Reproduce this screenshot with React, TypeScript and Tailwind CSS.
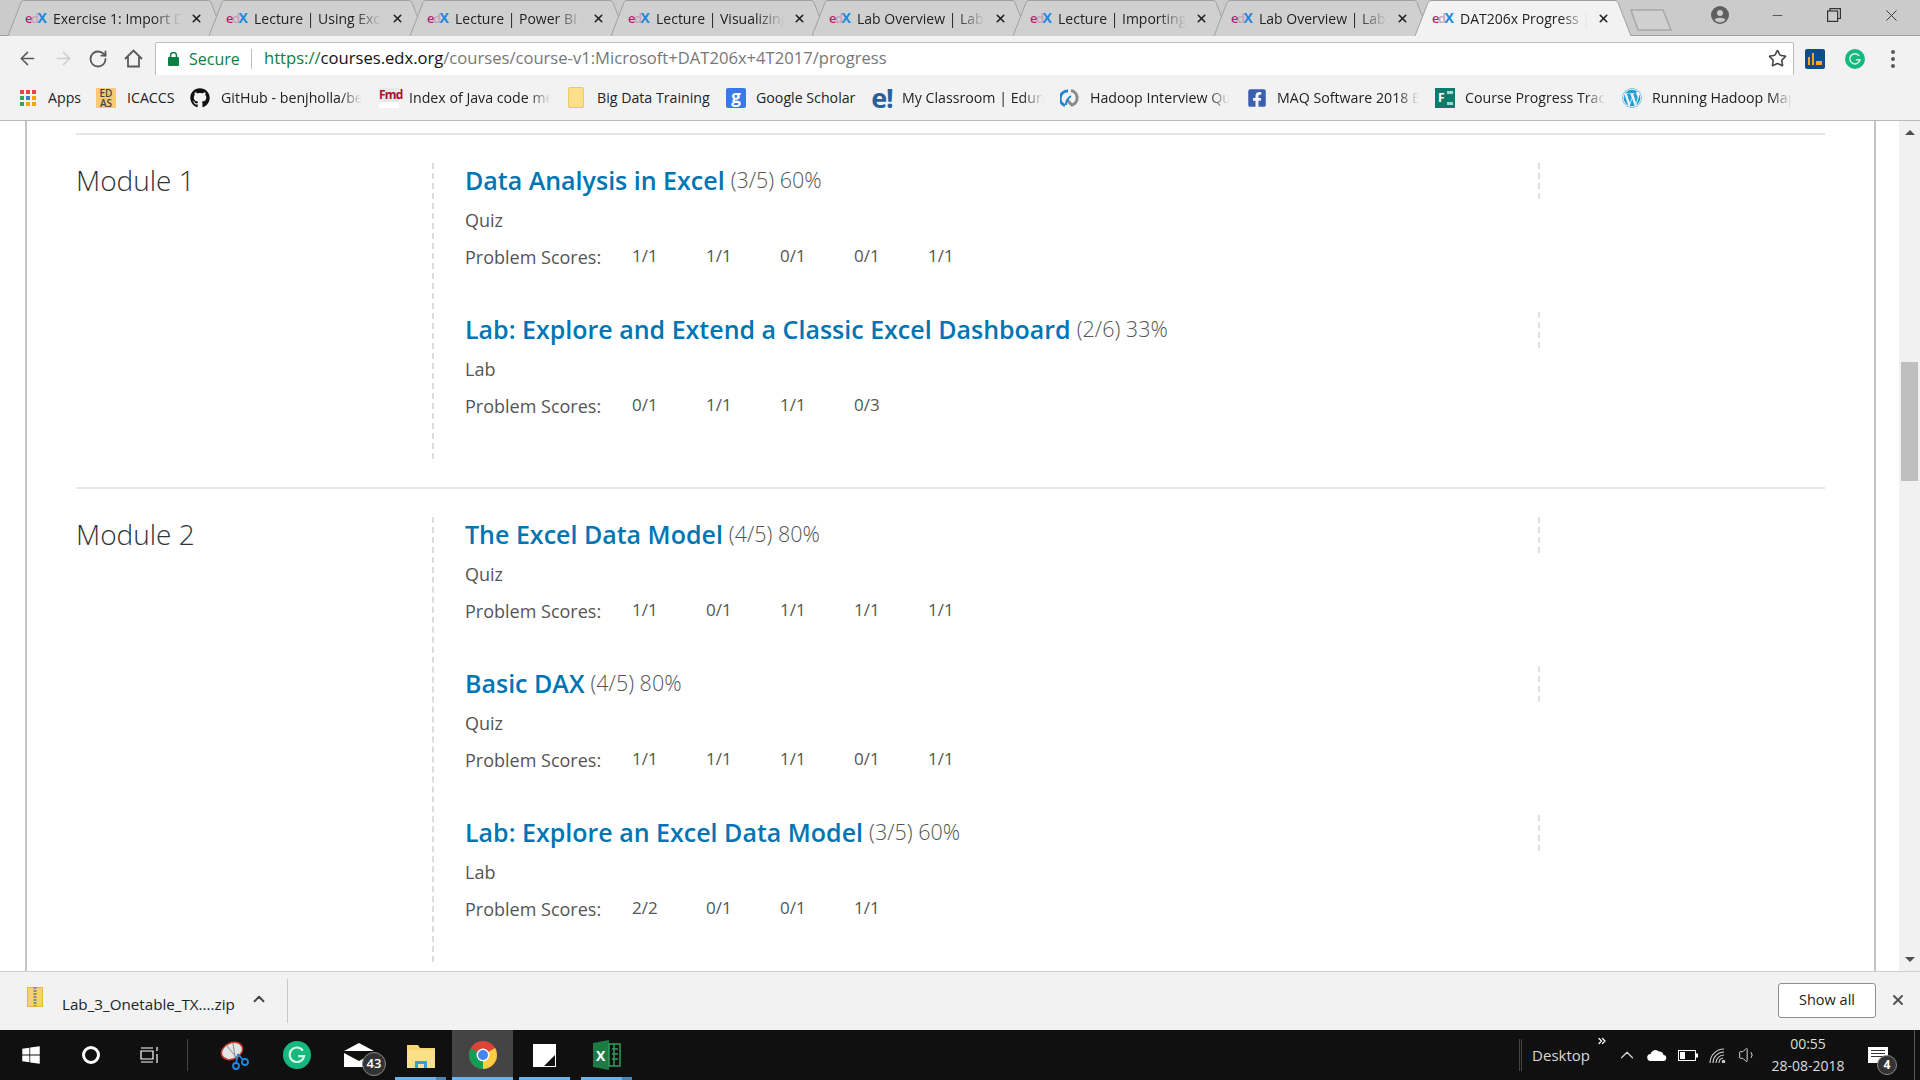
import { ArrowLeft, ArrowRight, RotateCw, Star, ChevronUp, ChevronsRight, X, Minus, Volume1 } from 'lucide-react';
import { FaGithub, FaWindows, FaWordpress, FaFacebookSquare } from 'react-icons/fa';

const tabs = [
  'Exercise 1: Import Data',
  'Lecture | Using Excel',
  'Lecture | Power BI M',
  'Lecture | Visualizing',
  'Lab Overview | Lab:',
  'Lecture | Importing',
  'Lab Overview | Lab:',
  'DAT206x Progress | ',
];

function EdxLogo() {
  return (
    <span className="flex w-[20px] items-baseline text-[13px] leading-none font-semibold tracking-[-1.5px]">
      <span className="text-[#b3206f]">e</span>
      <span className="text-[#c7a3b6]">d</span>
      <span className="text-[14px] font-bold text-[#1b8ae0]">X</span>
    </span>
  );
}

function Tab({ title, active }: { title: string; active?: boolean }) {
  return (
    <div className={`relative -mr-[16px] h-[36px] w-[217px] shrink-0 ${active ? 'z-10' : ''}`}>
      <svg className="absolute inset-0" width="217" height="36" viewBox="0 0 217 36">
        <path
          d="M0,36 L13,2.5 Q14,0.5 16,0.5 H200 Q202,0.5 203,2.5 L216,36"
          fill={active ? '#f2f2f2' : '#d0d0d0'}
          stroke="#a0a0a0"
        />
      </svg>
      <div className="relative flex h-[36px] items-center pl-[17px]">
        <EdxLogo />
        <span className="ml-[8px] w-[128px] overflow-hidden text-[14px] whitespace-nowrap text-[#222] [mask-image:linear-gradient(to_right,black_78%,transparent)]">
          {title}
        </span>
        <X className="ml-[9px] text-[#222]" size={13} strokeWidth={3} />
      </div>
    </div>
  );
}

function Grammarly({ size }: { size: number }) {
  return (
    <svg width={size} height={size} viewBox="0 0 24 24">
      <circle cx="12" cy="12" r="12" fill="#15b87f" />
      <path d="M17 8.2A6.2 6.2 0 1 0 18 13h-5" fill="none" stroke="#d8f5ea" strokeWidth="1.8" />
    </svg>
  );
}

function AppsGrid() {
  const colors = ['#e8453c', '#e8453c', '#e8453c', '#34a853', '#3b78e7', '#f4a400', '#34a853', '#f4a400', '#f4a400'];
  return (
    <span className="grid h-[16px] w-[16px] grid-cols-3 gap-[2px]">
      {colors.map((c, i) => (
        <span key={i} className="h-[4px] w-[4px]" style={{ background: c }} />
      ))}
    </span>
  );
}

const bookmarks = [
  {
    icon: (
      <span className="flex h-[20px] w-[20px] flex-col items-center bg-[#f6cb74] text-[10px] leading-[10px] font-semibold text-[#444]">
        <span>ED</span>
        <span>AS</span>
      </span>
    ),
    text: 'ICACCS', w: 'w-[48px]', ml: 'ml-[15px]', gap: 'ml-[11px]',
  },
  { icon: <FaGithub className="text-[#111]" size={20} />, text: 'GitHub - benjholla/bespoke', w: 'w-[141px]', ml: 'ml-[15px]', gap: 'ml-[11px]', fade: true },
  {
    icon: (
      <span className="flex h-[20px] w-[20px] items-start bg-white">
        <span className="h-[14px] w-[20px] bg-[#e8e8e8] text-center text-[12px] leading-[14px] font-bold tracking-[-0.8px] text-[#b01030]">Fmd</span>
      </span>
    ),
    text: 'Index of Java code metrics', w: 'w-[142px]', ml: 'ml-[17px]', fade: true,
  },
  { icon: <span className="mx-[2px] h-[21px] w-[16px] rounded-[2px] border border-[#eecb5e] bg-[#fbe08a]" />, text: 'Big Data Training', w: 'w-[113px]', ml: 'ml-[15px]', gap: 'ml-[11px]' },
  {
    icon: (
      <span className="flex h-[20px] w-[20px] items-center justify-center rounded-[2px] bg-[#3b78e7] pb-[3px] text-[17px] leading-none font-bold text-white">g</span>
    ),
    text: 'Google Scholar', w: 'w-[101px]', ml: 'ml-[16px]',
  },
  { icon: <span className="flex h-[20px] w-[20px] items-center justify-center pb-[1px] text-[27px] leading-none font-bold tracking-[-1px] text-[#2a5f9e]">e!</span>, text: 'My Classroom | Edureka', w: 'w-[142px]', ml: 'ml-[15px]', fade: true },
  {
    icon: (
      <svg width="20" height="20" viewBox="0 0 20 20" fill="none" strokeWidth="3">
        <path d="M8 3A7.5 7.5 0 0 0 5 17.5" stroke="#1c86d1" />
        <path d="M11 2.5a7.5 7.5 0 0 1 1 14.5L7 12" stroke="#8a8a8a" />
        <path d="M6 17c0-4 2-7 5-9" stroke="#1c86d1" strokeWidth="2" />
      </svg>
    ),
    text: 'Hadoop Interview Questions', w: 'w-[140px]', ml: 'ml-[16px]', fade: true,
  },
  { icon: <FaFacebookSquare className="text-[#3b5fb0]" size={20} />, text: 'MAQ Software 2018 Batch', w: 'w-[142px]', ml: 'ml-[17px]', fade: true },
  {
    icon: (
      <span className="flex h-[20px] w-[20px] items-center bg-[#0f7b6c] pl-[3px] text-[12px] leading-none font-bold text-white">
        F
        <span className="ml-[2px] h-[14px] w-[6px] border-y-[3px] border-[#9fd8cf] bg-[#0f7b6c]" />
      </span>
    ),
    text: 'Course Progress Tracker', w: 'w-[141px]', ml: 'ml-[16px]', fade: true,
  },
  { icon: <FaWordpress className="text-[#21a0d8]" size={20} />, text: 'Running Hadoop MapReduce', w: 'w-[140px]', ml: 'ml-[16px]', fade: true },
];

interface Item {
  title: string;
  stats: string;
  kind: string;
  scores: string[];
}

const modules: { name: string; items: Item[] }[] = [
  {
    name: 'Module 1',
    items: [
      { title: 'Data Analysis in Excel', stats: '(3/5) 60%', kind: 'Quiz', scores: ['1/1', '1/1', '0/1', '0/1', '1/1'] },
      { title: 'Lab: Explore and Extend a Classic Excel Dashboard', stats: '(2/6) 33%', kind: 'Lab', scores: ['0/1', '1/1', '1/1', '0/3'] },
    ],
  },
  {
    name: 'Module 2',
    items: [
      { title: 'The Excel Data Model', stats: '(4/5) 80%', kind: 'Quiz', scores: ['1/1', '0/1', '1/1', '1/1', '1/1'] },
      { title: 'Basic DAX', stats: '(4/5) 80%', kind: 'Quiz', scores: ['1/1', '1/1', '1/1', '0/1', '1/1'] },
      { title: 'Lab: Explore an Excel Data Model', stats: '(3/5) 60%', kind: 'Lab', scores: ['2/2', '0/1', '0/1', '1/1'] },
    ],
  },
];

function Section({ item }: { item: Item }) {
  return (
    <div className="mb-[38px] h-[111px] last:mb-[36px]">
      <div className="flex h-[36px] items-center border-r-2 border-dashed border-[#e0e0e0] pb-[2px]">
        <span className="text-[25px] leading-none font-semibold text-[#0075b4]">{item.title}</span>
        <span className="ml-[6px] text-[21.5px] leading-none font-light text-[#555]">{item.stats}</span>
      </div>
      <div className="flex h-[41px] items-center pt-[2px] text-[18px] font-medium text-[#555]">{item.kind}</div>
      <div className="flex h-[34px] items-center">
        <span className="w-[167px] text-[18px] font-medium text-[#555]">Problem Scores:</span>
        {item.scores.map((s, i) => (
          <span key={i} className="mb-[2px] w-[74px] text-[17px] text-[#555]">{s}</span>
        ))}
      </div>
    </div>
  );
}

function TaskSlot({ className = '', children, underline, stacked }: { className?: string; children: React.ReactNode; underline?: boolean; stacked?: boolean }) {
  return (
    <div className={`relative flex h-[50px] w-[51px] items-center justify-center ${className}`}>
      {children}
      {underline && (
        <span className="absolute right-0 bottom-0 left-0 flex h-[3px] justify-end bg-[#6cb2e8]">
          {stacked && <span className="w-[10px] bg-[#4a86b4]" />}
        </span>
      )}
    </div>
  );
}

export default function App() {
  return (
    <div className="flex h-[1080px] w-[1920px] flex-col overflow-hidden bg-white font-['Open_Sans',sans-serif]">
      {/* Tab strip */}
      <div className="flex h-[36px] shrink-0 border-b border-[#a0a0a0] bg-[#cbcbcb] pl-[8px]">
        {tabs.map((t, i) => (
          <Tab key={i} title={t} active={i === 7} />
        ))}
        <svg className="mt-[9px] ml-[14px] shrink-0" width="42" height="22" viewBox="0 0 42 22">
          <path d="M1,1 H33 L41,21 H8 Z" fill="#d0d0d0" stroke="#a8a8a8" strokeWidth="1.5" />
        </svg>
        <div className="ml-auto flex h-[30px] items-center text-[#333]">
          <div className="flex w-[56px] justify-center">
            <svg width="18" height="18" viewBox="0 0 18 18">
              <circle cx="9" cy="9" r="9" fill="#5f5f5f" />
              <circle cx="9" cy="7" r="3" fill="#cbcbcb" />
              <path d="M3.5 14c1-3 10-3 11 0a7.5 7.5 0 0 1-11 0z" fill="#cbcbcb" />
            </svg>
          </div>
          <div className="flex w-[58px] justify-center"><Minus size={15} strokeWidth={1.2} /></div>
          <div className="flex w-[56px] justify-center">
            <svg width="14" height="14" viewBox="0 0 14 14" fill="none" stroke="#333" strokeWidth="1.2">
              <rect x="0.6" y="3" width="10" height="10.4" />
              <path d="M3 3V0.6h10.4V10.5H11" />
            </svg>
          </div>
          <div className="flex w-[58px] justify-center"><X size={19} strokeWidth={1.2} /></div>
        </div>
      </div>

      {/* Toolbar */}
      <div className="flex h-[39px] shrink-0 items-center bg-[#f2f2f2] pt-[6px]">
        <div className="flex w-[155px] items-center pl-[17px]">
          <ArrowLeft className="text-[#5a5a5a]" size={21} strokeWidth={1.8} />
          <ArrowRight className="ml-[15px] text-[#cfcfcf]" size={21} strokeWidth={1.8} />
          <RotateCw className="ml-[14px] text-[#5a5a5a]" size={20} strokeWidth={2.2} />
          <svg className="ml-[16px]" width="19" height="19" viewBox="0 0 19 19" fill="none" stroke="#5a5a5a" strokeWidth="1.8">
            <path d="M1 10L9.5 1.5 18 10M4 8v9.5h11V8" />
          </svg>
        </div>
        <div className="flex h-[34px] w-[1639px] items-center rounded-[2px] border border-[#bdbdbd] bg-white pl-[12px]">
          <svg width="11" height="14" viewBox="0 0 11 14">
            <rect x="0" y="5" width="11" height="9" rx="1" fill="#0b8043" />
            <path d="M2.5 5.5V3.5a3 3 0 0 1 6 0v2" fill="none" stroke="#0b8043" strokeWidth="1.5" />
          </svg>
          <span className="ml-[10px] w-[62px] text-[16px] text-[#0b8043]">Secure</span>
          <span className="h-[20px] w-px bg-[#bbb]" />
          <span className="ml-[12px] text-[16.6px] whitespace-nowrap text-[#777]">
            <span className="text-[#0b8043]">https://</span>
            <span className="text-[#111]">courses.edx.org</span>
            /courses/course-v1:Microsoft+DAT206x+4T2017/progress
          </span>
          <Star className="mr-[6px] ml-auto text-[#444]" size={19} strokeWidth={2} />
        </div>
        <div className="ml-[11px] flex h-[20px] w-[20px] items-end justify-center gap-[2px] rounded-[2px] bg-[#0f4c8a] pb-[4px]">
          <span className="h-[8px] w-[2px] bg-[#f5a623]" />
          <span className="h-[12px] w-[2px] bg-[#f5a623]" />
          <span className="h-[4px] w-[6px] bg-[#f5a623]" />
        </div>
        <div className="ml-[20px]"><Grammarly size={20} /></div>
        <div className="ml-[26px] flex flex-col gap-[3px]">
          <span className="h-[4px] w-[4px] rounded-full bg-[#5a5a5a]" />
          <span className="h-[4px] w-[4px] rounded-full bg-[#5a5a5a]" />
          <span className="h-[4px] w-[4px] rounded-full bg-[#5a5a5a]" />
        </div>
      </div>

      {/* Bookmarks bar */}
      <div className="flex h-[46px] shrink-0 items-center border-b border-[#b9b9b9] bg-[#f2f2f2] pt-[1px] pl-[20px] text-[14.2px] whitespace-nowrap text-[#222]">
        <AppsGrid />
        <span className="ml-[12px] w-[33px]">Apps</span>
        {bookmarks.map((b, i) => (
          <div key={i} className={`flex items-center ${b.ml}`}>
            {b.icon}
            <span className={`${b.gap ?? 'ml-[10px]'} ${b.w} overflow-hidden ${b.fade ? '[mask-image:linear-gradient(to_right,black_85%,transparent)]' : ''}`}>
              {b.text}
            </span>
          </div>
        ))}
      </div>

      {/* Page */}
      <div className="flex min-h-0 flex-1">
        <div className="w-[25px] shrink-0" />
        <div className="w-[1851px] shrink-0 overflow-hidden border-x-2 border-[#c4c4c4] px-[49px] pt-[12px]">
          <div className="border-t-2 border-[#e6e6e6]">
            {modules.map((m) => (
              <div key={m.name} className="flex border-b-2 border-[#e6e6e6] pt-[28px] pb-[28px]">
                <h2 className="w-[356px] shrink-0 text-[28px] leading-[35px] font-light text-[#333]">{m.name}</h2>
                <div className="flex-1 border-l-2 border-dashed border-[#dcdcdc] pr-[285px] pl-[31px]">
                  {m.items.map((it) => (
                    <Section key={it.title} item={it} />
                  ))}
                </div>
              </div>
            ))}
          </div>
        </div>
        <div className="w-[23px] shrink-0" />
        <div className="flex w-[21px] shrink-0 flex-col items-center bg-[#f1f1f1]">
          <span className="mt-[9px] h-0 w-0 border-x-[5px] border-b-[5px] border-x-transparent border-b-[#505050]" />
          <span className="mt-[227px] h-[119px] w-[17px] bg-[#bfbfbf]" />
          <span className="mt-auto mb-[9px] h-0 w-0 border-x-[5px] border-t-[5px] border-x-transparent border-t-[#505050]" />
        </div>
      </div>

      {/* Download bar */}
      <div className="flex h-[59px] shrink-0 items-center border-t border-[#cfcfcf] bg-[#f2f2f2]">
        <svg className="mb-[8px] ml-[27px]" width="16" height="20" viewBox="0 0 16 20">
          <rect x="0.5" y="0.5" width="15" height="19" fill="#f5d36b" stroke="#e2b93f" />
          <path d="M8 0v19" stroke="#8a8a8a" strokeWidth="3" strokeDasharray="2 1" />
        </svg>
        <span className="ml-[19px] w-[181px] pt-[6px] text-[15.2px] whitespace-nowrap text-[#222]">Lab_3_Onetable_TX....zip</span>
        <ChevronUp className="mb-[4px] ml-[7px] text-[#444]" size={18} strokeWidth={2.5} />
        <span className="ml-[19px] h-[44px] w-px bg-[#c8c8c8]" />
        <button className="mb-[2px] ml-auto h-[35px] w-[98px] rounded-[3px] border border-[#8f8f8f] bg-white text-[14.5px] text-[#222]">Show all</button>
        <X className="mx-[14px] mb-[2px] text-[#555]" size={16} strokeWidth={3} />
      </div>

      {/* Windows taskbar */}
      <div className="flex h-[50px] shrink-0 items-center bg-[#101010] text-white">
        <TaskSlot className="ml-[5px]"><FaWindows size={20} /></TaskSlot>
        <TaskSlot className="ml-[9px]"><span className="h-[18px] w-[18px] rounded-full border-[3px] border-white" /></TaskSlot>
        <TaskSlot className="ml-[8px]">
          <svg width="20" height="20" viewBox="0 0 20 20" fill="none" stroke="#fff" strokeWidth="1.2">
            <path d="M1 3h12M1 17h12M1 6h12v8H1zM17 2v4M17 9v9" />
          </svg>
        </TaskSlot>
        <span className="ml-[12px] h-[32px] w-px bg-[#444]" />
        <TaskSlot className="ml-[21px]">
          <svg width="30" height="30" viewBox="0 0 30 30">
            <ellipse cx="12" cy="11" rx="11" ry="8" transform="rotate(-25 12 11)" fill="#e4e4e4" stroke="#c0392b" strokeWidth="1.5" />
            <path d="M6 5l10 12M13 3l2 14" stroke="#8a8a8a" />
            <circle cx="16" cy="26" r="3" fill="none" stroke="#1f88e0" strokeWidth="1.8" />
            <circle cx="25" cy="22" r="3" fill="none" stroke="#1f88e0" strokeWidth="1.8" />
            <path d="M16 23l2-9M23 20l-5-6" stroke="#1f88e0" strokeWidth="1.8" />
          </svg>
        </TaskSlot>
        <TaskSlot className="ml-[11px]"><Grammarly size={28} /></TaskSlot>
        <TaskSlot className="ml-[11px]">
          <svg width="30" height="24" viewBox="0 0 30 24">
            <path d="M0 8L15 0l15 8z" fill="#fff" />
            <path d="M0 10l15 8 15-8v14H0z" fill="#fff" />
          </svg>
          <span className="absolute top-[22px] left-[29px] flex h-[24px] w-[24px] items-center justify-center rounded-full border border-[#888] bg-[#333] text-[13px] font-semibold">43</span>
        </TaskSlot>
        <TaskSlot className="ml-[11px]" underline stacked>
          <svg width="28" height="26" viewBox="0 0 28 26">
            <path d="M0 3h11l2 3h15v20H0z" fill="#f7d774" />
            <rect x="0" y="8" width="28" height="18" fill="#fbe08a" />
            <path d="M8 26v-7h12v7h-3v-4h-6v4z" fill="#2aa0e6" />
          </svg>
        </TaskSlot>
        <TaskSlot className="ml-[6px] w-[61px] bg-[#444]" underline>
          <svg width="28" height="28" viewBox="0 0 28 28">
            <circle cx="14" cy="14" r="14" fill="#db4437" />
            <path d="M14 14L1.88 7A14 14 0 0 0 14 28z" fill="#0f9d58" />
            <path d="M14 14V28A14 14 0 0 0 26.12 7z" fill="#ffcd40" />
            <circle cx="14" cy="14" r="6.5" fill="#fff" />
            <circle cx="14" cy="14" r="5" fill="#4285f4" />
          </svg>
        </TaskSlot>
        <TaskSlot className="ml-[6px]" underline>
          <svg width="23" height="23" viewBox="0 0 23 23">
            <rect width="23" height="23" fill="#fff" />
            <path d="M11 22L22 11V22z" fill="#111" />
          </svg>
        </TaskSlot>
        <TaskSlot className="ml-[11px]" underline stacked>
          <svg width="28" height="30" viewBox="0 0 28 30">
            <path d="M0 3l16-3v30L0 27z" fill="#1d7a45" />
            <rect x="16" y="4" width="11" height="22" fill="none" stroke="#2f9e5f" strokeWidth="1.5" />
            <path d="M19 9h6M19 14h6M19 19h6M21 4v22" stroke="#2f9e5f" strokeWidth="1.5" />
            <text x="3" y="21" fontSize="14" fontWeight="700" fill="#fff">X</text>
          </svg>
        </TaskSlot>

        <div className="ml-auto flex items-center text-[#d8d8d8]">
          <span className="h-[32px] w-[3px] border-x border-[#444]" />
          <span className="ml-[10px] text-[15px]">Desktop</span>
          <ChevronsRight className="mb-[28px] ml-[6px] text-white" size={12} strokeWidth={2.5} />
          <ChevronUp className="ml-[8px]" size={22} strokeWidth={1.3} />
          <svg className="ml-[9px]" width="20" height="12" viewBox="0 0 20 12">
            <path d="M4 12a3.5 3.5 0 0 1-.5-7A5 5 0 0 1 12 2.5 4 4 0 0 1 16.5 6 3 3 0 0 1 16 12z" fill="#fff" />
          </svg>
          <svg className="ml-[11px]" width="20" height="11" viewBox="0 0 20 11">
            <rect x="0.5" y="0.5" width="17" height="10" fill="none" stroke="#fff" />
            <rect x="2" y="2" width="5" height="7" fill="#fff" />
            <rect x="18" y="3.5" width="2" height="4" fill="#fff" />
          </svg>
          <svg className="ml-[11px]" width="17" height="15" viewBox="0 0 17 15" fill="none" stroke="#ccc" strokeWidth="1.1">
            <path d="M1 15A14 14 0 0 1 15 1M4 15A11 11 0 0 1 15 4M7 15a8 8 0 0 1 8-8M10 15a5 5 0 0 1 4-5" />
            <circle cx="14.5" cy="13.5" r="1.2" fill="#ccc" />
          </svg>
          <Volume1 className="ml-[12px]" size={20} strokeWidth={1.2} />
          <div className="ml-[10px] flex w-[80px] flex-col items-center text-[14px] leading-[22px] text-[#ddd]">
            <span>00:55</span>
            <span>28-08-2018</span>
          </div>
          <div className="relative ml-[20px] flex w-[20px] flex-col gap-[2px] bg-white px-[3px] py-[3px] pb-[6px]">
            <span className="h-px bg-[#333]" />
            <span className="h-px bg-[#333]" />
            <span className="h-px bg-[#333]" />
            <span className="absolute top-[8px] left-[9px] flex h-[20px] w-[20px] items-center justify-center rounded-full border border-[#888] bg-[#333] text-[12px] font-bold text-white">4</span>
          </div>
          <span className="ml-[26px] h-[50px] w-px bg-[#555]" />
          <span className="w-[5px]" />
        </div>
      </div>
    </div>
  );
}
